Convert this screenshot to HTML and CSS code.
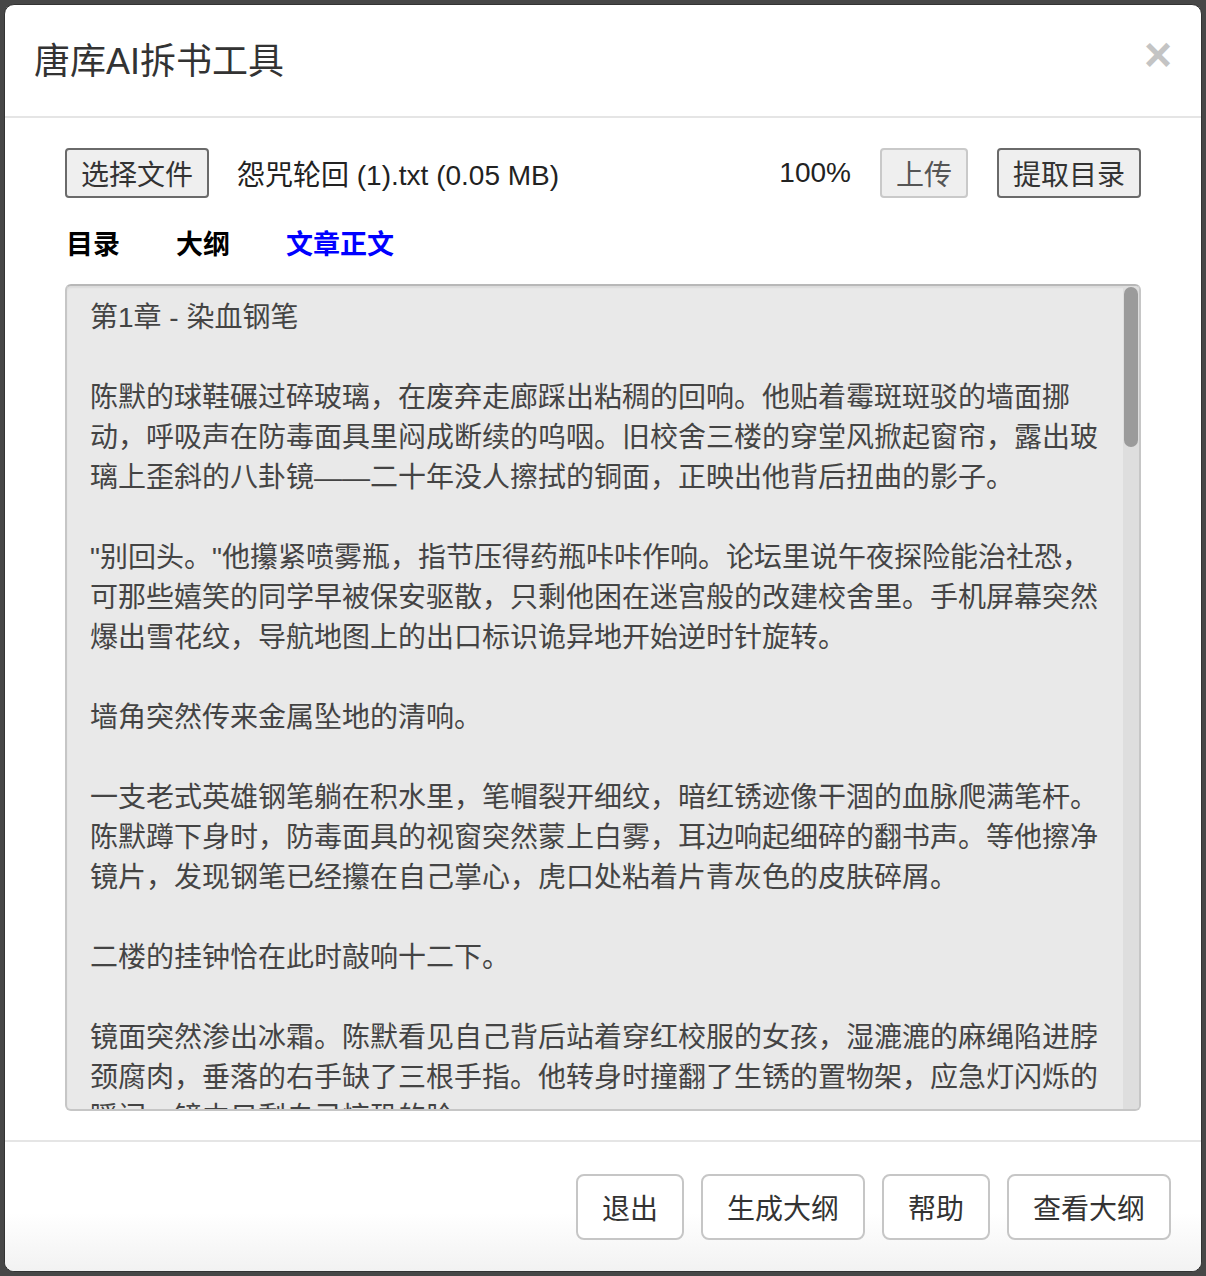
FILE: index.html
```html
<!DOCTYPE html>
<html lang="zh-CN">
<head>
  <meta charset="UTF-8">
  <title>唐库AI拆书工具</title>
  <link rel="stylesheet" href="styles.css">
</head>
<body>
  <!-- 弹窗 -->
  <div class="modal">
    <div class="modal-header">
      <h3>唐库AI拆书工具</h3>
      <button class="close">×</button>
    </div>

    <div class="modal-body">
      <!-- 上传区 -->
      <div class="upload-row">
        <button class="btn-file">选择文件</button>
        <span class="file-name">怨咒轮回 (1).txt (0.05 MB)</span>
        <span class="progress">100%</span>
        <button class="btn-small" disabled>上传</button>
        <button class="btn-small">提取目录</button>
      </div>

      <!-- 标签 -->
      <div class="tabs">
        <a class="tab">目录</a>
        <a class="tab">大纲</a>
        <a class="tab active">文章正文</a>
      </div>

      <!-- 正文 -->
      <div class="content-box">
        <div class="content">第1章 - 染血钢笔

陈默的球鞋碾过碎玻璃，在废弃走廊踩出粘稠的回响。他贴着霉斑斑驳的墙面挪动，呼吸声在防毒面具里闷成断续的呜咽。旧校舍三楼的穿堂风掀起窗帘，露出玻璃上歪斜的八卦镜——二十年没人擦拭的铜面，正映出他背后扭曲的影子。

"别回头。"他攥紧喷雾瓶，指节压得药瓶咔咔作响。论坛里说午夜探险能治社恐，可那些嬉笑的同学早被保安驱散，只剩他困在迷宫般的改建校舍里。手机屏幕突然爆出雪花纹，导航地图上的出口标识诡异地开始逆时针旋转。

墙角突然传来金属坠地的清响。

一支老式英雄钢笔躺在积水里，笔帽裂开细纹，暗红锈迹像干涸的血脉爬满笔杆。陈默蹲下身时，防毒面具的视窗突然蒙上白雾，耳边响起细碎的翻书声。等他擦净镜片，发现钢笔已经攥在自己掌心，虎口处粘着片青灰色的皮肤碎屑。

二楼的挂钟恰在此时敲响十二下。

镜面突然渗出冰霜。陈默看见自己背后站着穿红校服的女孩，湿漉漉的麻绳陷进脖颈腐肉，垂落的右手缺了三根手指。他转身时撞翻了生锈的置物架，应急灯闪烁的瞬间，镜中只剩自己惊恐的脸。

他跌跌撞撞地冲下楼梯，手电筒的光圈在墙上乱晃。台阶上布满了潮湿的脚印，每一个都比他的鞋码小一号，脚尖却全部朝向他来时的方向。

"你终于来了。"</div>
        <div class="scrollbar">
          <div class="thumb"></div>
        </div>
      </div>
    </div>

    <!-- 底部按钮 -->
    <div class="modal-footer">
      <button class="btn">退出</button>
      <button class="btn">生成大纲</button>
      <button class="btn">帮助</button>
      <button class="btn">查看大纲</button>
    </div>
  </div>
</body>
</html>
```

FILE: styles.css
```css
body {
  margin: 0;
  padding: 4px;
  background-color: #474747;
  font-family: "Liberation Sans", "Noto Sans CJK SC", sans-serif;
  color: #333;
  overflow: hidden;
}

.modal {
  height: 1266px;
  display: flex;
  flex-direction: column;
  background: #fff;
  border: 1px solid #333;
  border-radius: 10px;
  overflow: hidden;
}

.modal-header {
  height: 111px;
  display: flex;
  align-items: center;
  justify-content: space-between;
  padding: 0 29px 0 29px;
  border-bottom: 2px solid #e5e5e5;
}

.modal-header h3 {
  margin: 0 0 6px 0;
  font-size: 36px;
  font-weight: normal;
  color: #333;
}

.close {
  border: none;
  background: none;
  padding: 0;
  margin-top: -12px;
  font-family: "Liberation Sans", sans-serif;
  font-size: 48px;
  font-weight: bold;
  line-height: 1;
  color: #c4c4c4;
  cursor: pointer;
}

.modal-body {
  flex: 1;
  padding: 30px 60px 0 60px;
}

.upload-row {
  display: flex;
  align-items: center;
  height: 50px;
  font-size: 28px;
  color: #222;
}

.upload-row button {
  height: 50px;
  padding: 0 14px;
  font-family: inherit;
  font-size: 28px;
  color: #333;
  background: #efefef;
  border: 2px solid #6a6a6a;
  border-radius: 4px;
  cursor: pointer;
}

.upload-row button:disabled {
  border-color: #c9c9c9;
  color: #555;
}

.file-name {
  margin-left: 28px;
}

.progress {
  margin-left: auto;
  margin-right: 29px;
}

.btn-small + .btn-small {
  margin-left: 29px;
}

.tabs {
  display: flex;
  gap: 56px;
  margin: 27px 0 19px 1px;
  line-height: 40px;
}

.tab {
  font-size: 27px;
  font-weight: bold;
  color: #000;
  cursor: pointer;
}

.tab.active {
  color: #0000ff;
}

.content-box {
  display: flex;
  box-sizing: border-box;
  width: 1076px;
  height: 827px;
  background: #e9e9e9;
  border: 2px solid #c6c6c6;
  border-top-color: #b8b8b8;
  border-radius: 6px;
  box-shadow: inset 0 2px 2px rgba(0, 0, 0, 0.06);
  overflow: hidden;
}

.content {
  flex: 1;
  padding: 12px 15px 0 23px;
  white-space: pre-wrap;
  overflow: hidden;
  font-size: 28px;
  line-height: 40px;
  color: #444;
}

.scrollbar {
  width: 16px;
  flex-shrink: 0;
  background: #dedede;
}

.thumb {
  height: 160px;
  margin: 1px;
  border-radius: 7px;
  background: #9b9b9b;
}

.modal-footer {
  display: flex;
  justify-content: flex-end;
  gap: 17px;
  padding: 32px 30px 31px;
  border-top: 2px solid #e5e5e5;
  background: linear-gradient(#fff 55%, #f2f2f2);
}

.btn {
  height: 66px;
  padding: 0 24px;
  font-family: inherit;
  font-size: 28px;
  color: #333;
  background: #fff;
  border: 2px solid #c6c6c6;
  border-radius: 8px;
  cursor: pointer;
}
```
